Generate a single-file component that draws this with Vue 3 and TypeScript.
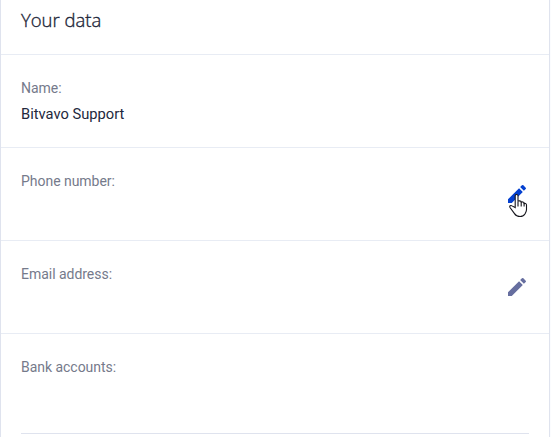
<script setup lang="ts">
interface Field {
  label: string
  value?: string
  editable?: boolean
  active?: boolean
}

const fields: Field[] = [
  { label: 'Name:', value: 'Bitvavo Support' },
  { label: 'Phone number:', editable: true, active: true },
  { label: 'Email address:', editable: true },
]
</script>

<template>
  <main class="page">
    <section class="card">
      <header class="title"><h1>Your data</h1></header>
      <div v-for="field in fields" :key="field.label" class="row">
        <div class="text">
          <span class="label">{{ field.label }}</span>
          <span v-if="field.value" class="value">{{ field.value }}</span>
        </div>
        <button v-if="field.editable" class="edit" :class="{ active: field.active }" :aria-label="field.label">
          <svg class="pencil" viewBox="0 0 24 24">
            <path d="M3 17.25V21h3.75L17.81 9.94l-3.75-3.75L3 17.25zM20.71 7.04a1 1 0 0 0 0-1.41l-2.34-2.34a1 1 0 0 0-1.41 0l-1.83 1.83 3.75 3.75 1.83-1.83z" />
          </svg>
          <svg v-if="field.active" class="pointer" viewBox="0 0 19 25">
            <path d="M6.2 14.5V2.8c0-1.8 2.8-1.8 2.8 0v6c0-1.3 3.2-1.2 3.2.2v.7c.2-1.2 2.9-1 2.9.5v.8c.3-1 2.4-.6 2.4.9v4.6c0 2-.9 3-1.4 4.2-.9 1.8-2.8 2.8-5 2.8-2.8 0-4.4-1-5.6-2.9L1 14.5c-.8-1.5.7-2.6 2-1.6z" />
            <path class="crease" d="M9 8.8v4.7M12.2 9.3v4.2M15.1 10.3v3.2" />
          </svg>
        </button>
      </div>
      <div class="accounts">
        <span class="label">Bank accounts:</span>
      </div>
    </section>
  </main>
</template>

<style>
body {
  background: #fff;
}
</style>

<style scoped>
.page {
  box-sizing: border-box;
  height: 437px;
  padding-right: 1px;
  overflow: hidden;
  background: #fbfcfe;
  font-family: Roboto, "Liberation Sans", sans-serif;
  font-size: 14px;
  line-height: 20px;
}
.card {
  box-sizing: border-box;
  height: 437px;
  border: solid #dfe3ee;
  border-width: 0 1px;
  background: #fff;
}
.title {
  box-sizing: border-box;
  height: 55px;
  padding: 6px 20px 0;
  border-bottom: 1px solid #e8ecf4;
}
h1 {
  margin: 0;
  color: #1d2538;
  font: 300 18.5px/28px "Open Sans", sans-serif;
  -webkit-text-stroke: 0.35px #1d2538;
}
.row {
  box-sizing: border-box;
  display: flex;
  justify-content: space-between;
  height: 93px;
  padding: 23px 20px 0;
  border-bottom: 1px solid #e8ecf4;
}
.text {
  display: flex;
  flex-direction: column;
  gap: 6px;
}
.label {
  color: #757a8b;
  letter-spacing: -0.03px;
}
.value {
  color: #22283c;
  font-size: 14.7px;
}
.edit {
  position: relative;
  width: 24px;
  height: 24px;
  margin-top: 11px;
  padding: 0;
  border: 0;
  background: none;
  color: #666e9f;
  cursor: pointer;
}
.active {
  color: #0440d0;
}
.pencil {
  display: block;
  width: 24px;
  height: 24px;
  fill: currentColor;
}
.pointer {
  position: absolute;
  left: 4px;
  top: 11px;
  width: 19px;
  height: 25px;
  fill: #fff;
  stroke: #15151c;
  stroke-width: 1.1;
}
.crease {
  fill: none;
}
.accounts {
  box-sizing: border-box;
  height: 100px;
  margin: 0 20px;
  padding-top: 23px;
  border-bottom: 1px solid #dfe3ee;
}
</style>
